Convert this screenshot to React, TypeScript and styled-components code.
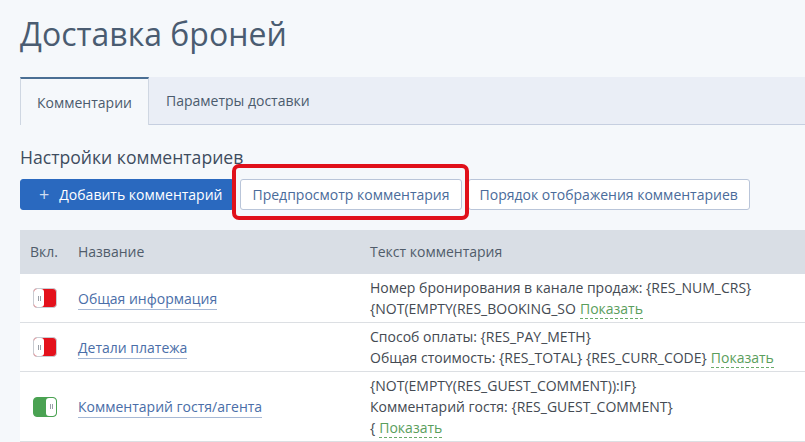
import styled, { createGlobalStyle } from "styled-components";

const GlobalStyle = createGlobalStyle`
  html, body {
    margin: 0;
    padding: 0;
    background: #f5f8fb;
    font-family: "Open Sans", "Liberation Sans", sans-serif;
  }
  #root {
    overflow: hidden;
    width: 805px;
    height: 442px;
  }
`;

const Page = styled.div`
  padding-left: 20px;
`;

const Title = styled.h1`
  margin: 14px 0 0;
  font-size: 32px;
  line-height: 40px;
  font-weight: 400;
  color: #4a5c71;
`;

const TabBar = styled.div`
  margin-top: 23px;
  display: flex;
  height: 47px;
  background: #eaeef6;
  border-bottom: 1px solid #c6cfe0;
`;

const Tab = styled.div<{ $active?: boolean }>`
  display: flex;
  align-items: center;
  padding: 0 17px;
  font-size: 14px;
  color: #4b5b6d;
  box-sizing: border-box;
  ${(p) =>
    p.$active &&
    `
    background: #f5f8fb;
    border-top: 2px solid #4a6f94;
    border-left: 1px solid #cfd7e2;
    border-right: 1px solid #cfd7e2;
    height: 48px;
    margin-bottom: -1px;
    padding: 0 16px;
  `}
`;

const Heading = styled.h2`
  margin: 20px 0 0;
  font-size: 17.6px;
  line-height: 24px;
  font-weight: 400;
  color: #3e4c5e;
`;

const Toolbar = styled.div`
  display: flex;
  gap: 6px;
  margin-top: 10px;
`;

const Button = styled.button<{ $primary?: boolean }>`
  height: 31px;
  box-sizing: border-box;
  border-radius: 3px;
  font-family: "Open Sans", "Liberation Sans", sans-serif;
  font-size: 14px;
  display: flex;
  align-items: center;
  gap: 10px;
  cursor: pointer;
  white-space: nowrap;
  border: 1px solid ${(p) => (p.$primary ? "#2a69bf" : "#b9c5d9")};
  background: ${(p) => (p.$primary ? "#2a69bf" : "#ffffff")};
  color: ${(p) => (p.$primary ? "#ffffff" : "#4a6b9a")};
  padding: ${(p) => (p.$primary ? "0 11px 0 18px" : "0 11px")};
`;

const Plus = styled.span`
  font-size: 18px;
  line-height: 1;
  color: #cfdcf0;
  margin-top: -2px;
`;

const Highlight = styled.div`
  position: relative;
  &::after {
    content: "";
    position: absolute;
    left: -8px;
    right: -7px;
    top: -15px;
    bottom: -10px;
    border: 4px solid #e0101a;
    border-radius: 7px;
    pointer-events: none;
  }
`;

const Table = styled.div`
  margin-top: 20px;
  width: 820px;
  background: #ffffff;
`;

const Row = styled.div<{ $head?: boolean }>`
  display: grid;
  grid-template-columns: 58px 292px 1fr;
  align-items: center;
  border-bottom: 1px solid ${(p) => (p.$head ? "#d9dee5" : "#dcdfe3")};
  background: ${(p) => (p.$head ? "#d9dee5" : "#ffffff")};
  min-height: ${(p) => (p.$head ? "43px" : "auto")};
  font-size: 14px;
  color: ${(p) => (p.$head ? "#505c6a" : "#444a52")};
`;

const Cell = styled.div<{ $pad?: string }>`
  padding: ${(p) => p.$pad ?? "0"};
`;

const CommentText = styled.div`
  padding: 3px 0;
  line-height: 21px;
`;

const Toggle = styled.span<{ $on: boolean }>`
  display: flex;
  flex-direction: ${(p) => (p.$on ? "row-reverse" : "row")};
  width: 24px;
  height: 20px;
  border-radius: 4px;
  overflow: hidden;
  box-sizing: border-box;
  border: 1px solid ${(p) => (p.$on ? "#4aa252" : "#c9ccd2")};
  background: ${(p) => (p.$on ? "#4aa252" : "#e4111b")};
`;

const Knob = styled.span`
  width: 10px;
  height: 100%;
  background: #ffffff;
  border-radius: 3px;
  display: flex;
  align-items: center;
  justify-content: center;
  gap: 1px;
  &::before,
  &::after {
    content: "";
    width: 1px;
    height: 5px;
    background: #9aa0a8;
  }
`;

const NameLink = styled.a`
  color: #4a6ea8;
  text-decoration: none;
  border-bottom: 1px solid #a6b8d4;
  padding-bottom: 1px;
`;

const ShowLink = styled.a`
  color: #5a9e5c;
  text-decoration: none;
  border-bottom: 1px dashed #6aab6a;
  margin-left: 4px;
`;

type Item = { on: boolean; name: string; lines: string[] };

const items: Item[] = [
  {
    on: false,
    name: "Общая информация",
    lines: ["Номер бронирования в канале продаж: {RES_NUM_CRS}", "{NOT(EMPTY(RES_BOOKING_SO"],
  },
  {
    on: false,
    name: "Детали платежа",
    lines: ["Способ оплаты: {RES_PAY_METH}", "Общая стоимость: {RES_TOTAL} {RES_CURR_CODE}"],
  },
  {
    on: true,
    name: "Комментарий гостя/агента",
    lines: [
      "{NOT(EMPTY(RES_GUEST_COMMENT)):IF}",
      "Комментарий гостя: {RES_GUEST_COMMENT}",
      "{",
    ],
  },
];

export default function App() {
  return (
    <Page>
      <GlobalStyle />
      <Title>Доставка броней</Title>
      <TabBar>
        <Tab $active>Комментарии</Tab>
        <Tab>Параметры доставки</Tab>
      </TabBar>
      <Heading>Настройки комментариев</Heading>
      <Toolbar>
        <Button $primary>
          <Plus>+</Plus>
          Добавить комментарий
        </Button>
        <Highlight>
          <Button>Предпросмотр комментария</Button>
        </Highlight>
        <Button>Порядок отображения комментариев</Button>
      </Toolbar>
      <Table>
        <Row $head>
          <Cell $pad="0 0 0 10px">Вкл.</Cell>
          <Cell>Название</Cell>
          <Cell>Текст комментария</Cell>
        </Row>
        {items.map((it) => (
          <Row key={it.name}>
            <Cell $pad="0 0 0 13px">
              <Toggle $on={it.on}>
                <Knob />
              </Toggle>
            </Cell>
            <Cell>
              <NameLink href="#">{it.name}</NameLink>
            </Cell>
            <CommentText>
              {it.lines.map((l, i) => (
                <div key={i}>
                  {l}
                  {i === it.lines.length - 1 && <ShowLink href="#">Показать</ShowLink>}
                </div>
              ))}
            </CommentText>
          </Row>
        ))}
      </Table>
    </Page>
  );
}
